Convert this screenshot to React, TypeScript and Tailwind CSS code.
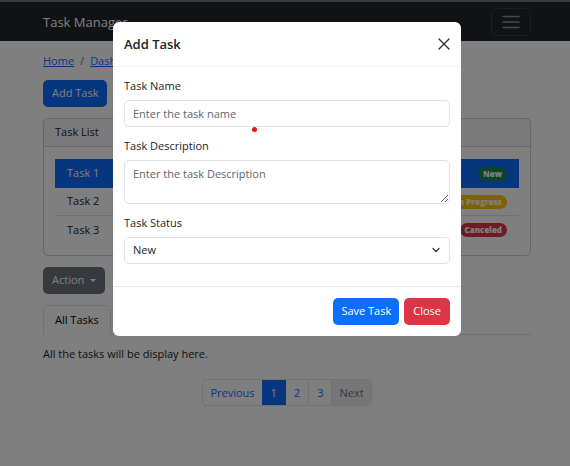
import type { ReactNode } from "react";

const tasks = [
  { name: "Task 1", status: "New", badge: "bg-[#198754]", row: "bg-[#0d6efd] text-white h-[29px]" },
  { name: "Task 2", status: "In Progress", badge: "bg-[#ffc107]", row: "h-7 border-b border-[#dee2e6]" },
  { name: "Task 3", status: "Canceled", badge: "bg-[#dc3545]", row: "h-7" },
];

function Field({ id, label, children }: { id: string; label: string; children: ReactNode }) {
  return (
    <div className="flex flex-col">
      <label htmlFor={id} className="mb-1.5 leading-4">
        {label}
      </label>
      {children}
    </div>
  );
}

function Page() {
  return (
    <div>
      <nav className="flex h-[41px] items-center justify-between border-t-2 border-[#70757b] bg-[#212529] pr-[39px] pl-[43px]">
        <a href="#" className="text-[13px] leading-5 text-white">
          Task Manager
        </a>
        <button
          type="button"
          aria-label="Toggle navigation"
          className="flex h-7 w-10 items-center justify-center rounded-md border border-white/10"
        >
          <svg viewBox="0 0 18 14" className="h-3.5 w-[18px]" stroke="#ffffff" strokeOpacity=".5" strokeWidth="1.5" strokeLinecap="round">
            <path d="M1 1.5h16M1 7h16M1 12.5h16" />
          </svg>
        </button>
      </nav>

      <main className="flex flex-col items-start pt-3 pr-[39px] pl-[43px]">
        <ol className="mb-[11px] flex gap-1.5 leading-4">
          <li>
            <a href="#" className="text-[#0d6efd] underline">Home</a>
          </li>
          <li className="text-[#6c757d]">/</li>
          <li>
            <a href="#" className="text-[#0d6efd] underline">Dashboard</a>
          </li>
        </ol>

        <button type="button" className="mb-[11px] h-[27px] rounded-[5px] bg-[#0d6efd] px-[9px] text-white">
          Add Task
        </button>

        <section className="mb-[11px] w-full rounded-[5px] border border-black/20">
          <h2 className="flex h-7 items-center border-b border-black/15 bg-black/[.03] px-[11px]">Task List</h2>
          <ul className="px-[11px] pt-3 pb-[11px]">
            {tasks.map((t) => (
              <li key={t.name} className={`flex items-center justify-between px-3 ${t.row}`}>
                {t.name}
                <span className={`rounded-full px-[5px] text-[8px] leading-[14px] font-extrabold text-white ${t.badge}`}>
                  {t.status}
                </span>
              </li>
            ))}
          </ul>
        </section>

        <button type="button" className="mb-[11px] flex h-[27px] items-center gap-1.5 rounded-[5px] bg-[#6c757d] px-[9px] text-white">
          Action
          <span className="border-x-[3px] border-t-[3px] border-x-transparent border-t-white" />
        </button>

        <div role="tablist" className="flex w-full border-b border-[#dee2e6]">
          <button type="button" role="tab" aria-selected="true" className="-mb-px h-[30px] rounded-t-[5px] border border-b-0 border-[#dee2e6] bg-white px-[11px] text-black">
            All Tasks
          </button>
        </div>
        <p className="mt-[11px] mb-[17px] leading-4">All the tasks will be display here.</p>

        <nav aria-label="Pages" className="flex h-[27px] self-center overflow-hidden rounded-[5px] border border-[#dee2e6] text-[#0d6efd]">
          <a href="#" className="px-[7px] leading-[25px]">Previous</a>
          <a href="#" aria-current="page" className="-my-px bg-[#0d6efd] px-[9px] leading-[27px] text-white">1</a>
          <a href="#" className="border-r border-[#dee2e6] px-2 leading-[25px]">2</a>
          <a href="#" className="border-r border-[#dee2e6] px-2 leading-[25px]">3</a>
          <span className="bg-[#e9ecef] px-[7px] leading-[25px] text-[#6c757d]">Next</span>
        </nav>
      </main>
    </div>
  );
}

function AddTaskDialog() {
  const control = "w-full rounded-[5px] border border-[#dee2e6] bg-white px-2 text-[#212529] placeholder:text-[#5f656b]";
  return (
    <div className="fixed inset-0 flex items-start justify-center bg-black/50 pt-[22px] pr-[39px] pl-[43px]">
      <form
        role="dialog"
        aria-labelledby="dialog-title"
        onSubmit={(e) => e.preventDefault()}
        className="relative w-full max-w-[348px] rounded-md bg-white"
      >
        <header className="flex h-[45px] items-center justify-between border-b border-[#f1f3f5] px-[11px]">
          <h1 id="dialog-title" className="text-[13px] leading-5 font-semibold">Add Task</h1>
          <button type="button" aria-label="Close dialog" className="flex size-3 items-center justify-center">
            <svg viewBox="0 0 12 12" className="size-3" stroke="#333" strokeWidth="1.4" strokeLinecap="round">
              <path d="M1 1l10 10M11 1L1 11" />
            </svg>
          </button>
        </header>

        <div className="flex flex-col gap-[11px] px-[11px] pt-[11px] pb-[22px]">
          <Field id="name" label="Task Name">
            <input id="name" placeholder="Enter the task name" className={`h-[27px] ${control}`} />
          </Field>
          <Field id="description" label="Task Description">
            <textarea id="description" placeholder="Enter the task Description" className={`h-11 resize py-[5px] leading-4 ${control}`} />
          </Field>
          <Field id="status" label="Task Status">
            <div className="relative">
              <select id="status" className={`block h-[27px] appearance-none ${control}`}>
                <option>New</option>
                <option>In Progress</option>
                <option>Canceled</option>
              </select>
              <svg viewBox="0 0 10 10" className="pointer-events-none absolute top-2 right-[9px] size-2.5" fill="none" stroke="#343a40" strokeWidth="1.3" strokeLinecap="round" strokeLinejoin="round">
                <path d="M2 3.5L5 6.5L8 3.5" />
              </svg>
            </div>
          </Field>
        </div>

        <footer className="flex justify-end gap-[5px] border-t border-[#e6e8ea] p-[11px] text-white">
          <button type="submit" className="h-[27px] rounded-[5px] bg-[#0d6efd] px-2">Save Task</button>
          <button type="button" className="h-[27px] rounded-[5px] bg-[#dc3545] px-[9px]">Close</button>
        </footer>
        <span className="absolute top-[105px] left-[139px] size-[5px] rounded-full bg-[#e81123]" />
      </form>
    </div>
  );
}

export default function App() {
  return (
    <div className="min-h-screen bg-white font-['Open_Sans','Noto_Sans',sans-serif] text-[11px] text-[#212529]">
      <Page />
      <AddTaskDialog />
    </div>
  );
}
